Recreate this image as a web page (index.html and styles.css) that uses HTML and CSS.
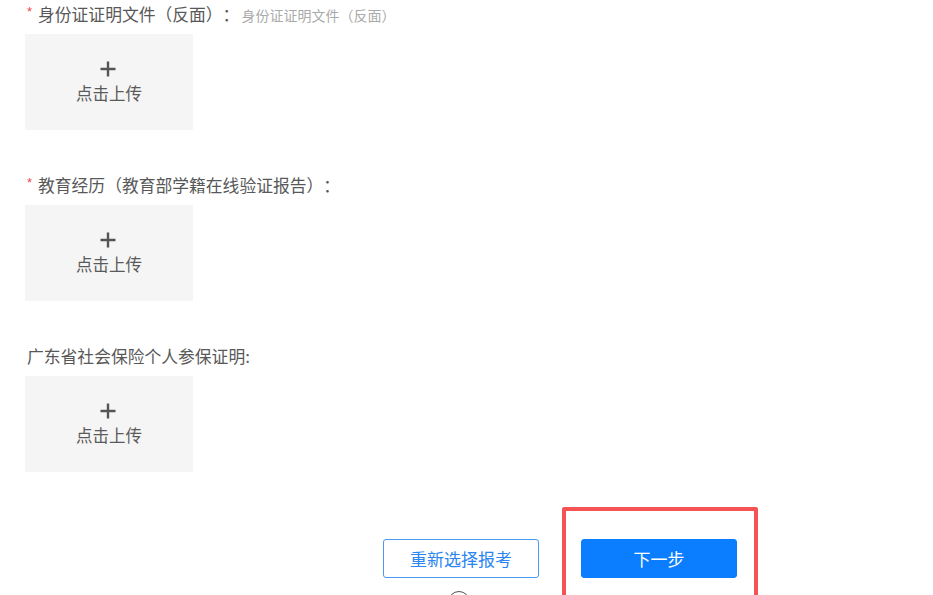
FILE: index.html
```html
<!DOCTYPE html>
<html lang="zh-CN">
<head>
<meta charset="utf-8">
<title>上传材料</title>
<link rel="stylesheet" href="styles.css">
</head>
<body>
<div class="form">
  <div class="field">
    <div class="label"><span class="req">*</span>身份证证明文件（反面）：<span class="hint">身份证证明文件（反面）</span></div>
    <div class="upload">
      <svg class="plus" width="18" height="18" viewBox="0 0 18 18"><path d="M9 1.5v15M1.5 9h15" stroke="#555" stroke-width="2.4" fill="none"/></svg>
      <span class="up-text">点击上传</span>
    </div>
  </div>
  <div class="field">
    <div class="label"><span class="req">*</span>教育经历（教育部学籍在线验证报告）：</div>
    <div class="upload">
      <svg class="plus" width="18" height="18" viewBox="0 0 18 18"><path d="M9 1.5v15M1.5 9h15" stroke="#555" stroke-width="2.4" fill="none"/></svg>
      <span class="up-text">点击上传</span>
    </div>
  </div>
  <div class="field">
    <div class="label">广东省社会保险个人参保证明:</div>
    <div class="upload">
      <svg class="plus" width="18" height="18" viewBox="0 0 18 18"><path d="M9 1.5v15M1.5 9h15" stroke="#555" stroke-width="2.4" fill="none"/></svg>
      <span class="up-text">点击上传</span>
    </div>
  </div>
</div>
<div class="actions">
  <button class="btn btn-outline">重新选择报考</button>
  <button class="btn btn-primary">下一步</button>
</div>
<div class="help"></div>
<div class="highlight"></div>
</body>
</html>
```
FILE: styles.css
```css
html, body {
  margin: 0;
  padding: 0;
  background: #fff;
  overflow: hidden;
}
body {
  font-family: "Noto Sans CJK SC", "Microsoft YaHei", sans-serif;
  color: #444;
  width: 933px;
  height: 595px;
  position: relative;
  text-spacing-trim: space-all;
}
.form {
  padding-left: 25px;
}
.field + .field {
  margin-top: 41px;
}
.label {
  height: 28px;
  line-height: 28px;
  font-size: 16.8px;
  color: #585858;
  white-space: nowrap;
  padding-left: 2px;
}
.req {
  display: inline-block;
  width: 11px;
  color: #f04848;
  font-family: "Liberation Sans", sans-serif;
  font-size: 13px;
  vertical-align: top;
  line-height: 23px;
}
.hint {
  font-size: 14px;
  color: #aaa;
  margin-left: 2px;
}
.upload {
  margin-top: 6px;
  width: 168px;
  height: 96px;
  background: #f5f5f5;
  display: flex;
  flex-direction: column;
  align-items: center;
  justify-content: center;
}
.plus {
  display: block;
  margin-top: 0;
  margin-left: -2px;
}
.up-text {
  margin-top: 4px;
  font-size: 16.5px;
  line-height: 22px;
  color: #5a5a5a;
}
.actions {
  display: flex;
  gap: 42px;
  margin-top: 67px;
  padding-left: 383px;
}
.btn {
  width: 156px;
  height: 39px;
  border-radius: 3px;
  font-family: "Noto Sans CJK SC", sans-serif;
  font-size: 17px;
  box-sizing: border-box;
  padding: 0;
  cursor: pointer;
}
.btn-outline {
  background: #fff;
  border: 1px solid #4a98f0;
  color: #2a85f0;
}
.btn-primary {
  background: #0b7dff;
  border: 1px solid #0b7dff;
  color: #fff;
}
.help {
  margin-top: 13px;
  margin-left: 448px;
  width: 22px;
  height: 22px;
  border: 1.5px solid #555;
  border-radius: 50%;
  box-sizing: border-box;
}
.highlight {
  position: absolute;
  left: 562px;
  top: 507px;
  width: 196px;
  height: 120px;
  border: 4px solid #f65454;
  border-radius: 2px;
  box-sizing: border-box;
}
```
